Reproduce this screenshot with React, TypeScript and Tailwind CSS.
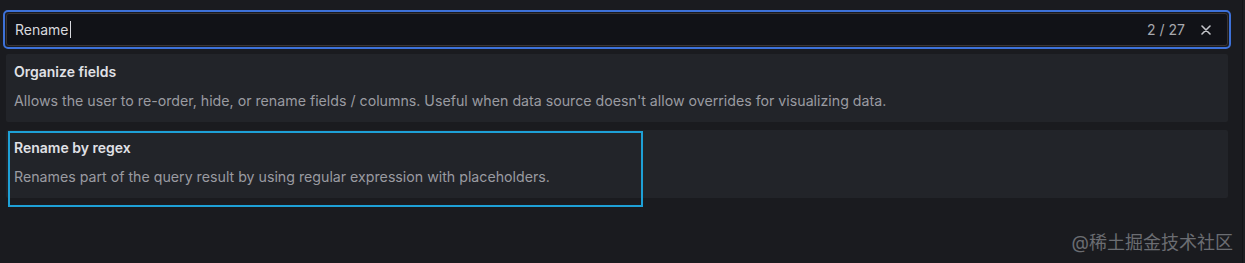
import React from "react";

const items = [
  {
    title: "Organize fields",
    description:
      "Allows the user to re-order, hide, or rename fields / columns. Useful when data source doesn't allow overrides for visualizing data.",
    picked: false,
  },
  {
    title: "Rename by regex",
    description: "Renames part of the query result by using regular expression with placeholders.",
    picked: true,
  },
];

export default function App() {
  return (
    <div
      className="flex h-[263px] w-[1245px] overflow-hidden bg-[#1a1b1f] text-[#ccccdc]"
      style={{ fontFamily: "Inter, 'Noto Sans CJK SC', sans-serif" }}
    >
      <div className="relative flex w-[1242px] flex-col pl-[3px] pr-[11px] pt-[10px]">
        {/* Search box */}
        <div className="rounded-[5px] border-2 border-[#3d71d9] p-px">
          <div className="flex h-[33px] items-center rounded-[3px] border border-[#3a3434] bg-[#111217] pl-[8px] pr-[16px] text-[14px]">
            <span className="text-[#d8d9de]">Rename</span>
            <span className="ml-px h-[17px] w-px bg-[#d8d9de]" />
            <span className="ml-auto text-[#a8a9ae]">2 / 27</span>
            <svg className="ml-[16px]" width="10" height="10" viewBox="0 0 10 10">
              <path d="M1 1L9 9M9 1L1 9" stroke="#c4c5ca" strokeWidth="1.6" strokeLinecap="round" />
            </svg>
          </div>
        </div>

        {/* Transformation cards */}
        <div className="mt-[5px] flex flex-col gap-[8px] px-[3px]">
          {items.map((item) => (
            <div key={item.title} className="h-[68px] rounded-[2px] bg-[#222429] px-[8px] pt-[9px]">
              <div className="text-[14px] font-semibold leading-[18px] text-[#e0e1e6]">{item.title}</div>
              <div className="mt-[11px] text-[14.2px] leading-[18px] text-[#9a9ba1]">{item.description}</div>
            </div>
          ))}
        </div>

        {/* Highlight box on the picked item */}
        <div className="pointer-events-none absolute left-[8px] top-[131px] h-[76px] w-[635px] border-2 border-[#1ea0d6]" />

        <div className="mt-auto mb-[8px] mr-[-2px] self-end text-[18px] leading-[24px] text-[#6b6d72]">
          @稀土掘金技术社区
        </div>
      </div>
      <div className="w-[3px] border-l border-[#131417] bg-[#1d1e22]" />
    </div>
  );
}
